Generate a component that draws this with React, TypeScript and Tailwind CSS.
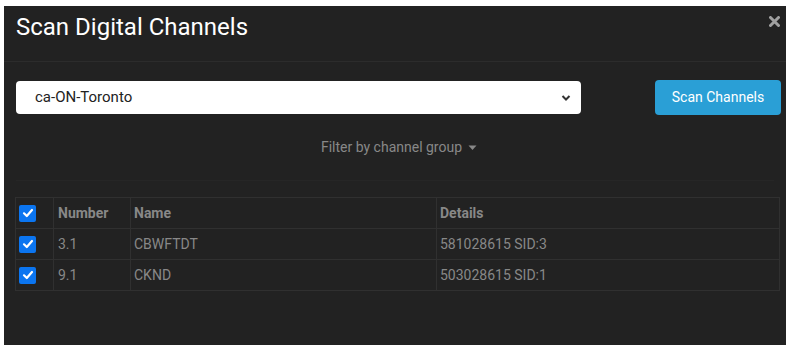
import React from "react";

function Check() {
  return (
    <span className="flex h-[17px] w-[17px] items-center justify-center rounded-[2px] bg-[#0b75f0]">
      <svg width="12" height="12" viewBox="0 0 12 12" fill="none">
        <path d="M2 6.3 L4.8 9 L10 3" stroke="white" strokeWidth="2.2" strokeLinecap="round" strokeLinejoin="round" />
      </svg>
    </span>
  );
}

const rows = [
  { n: "3.1", name: "CBWFTDT", d: "581028615 SID:3" },
  { n: "9.1", name: "CKND", d: "503028615 SID:1" },
];

export default function App() {
  return (
    <div className="h-[350px] w-[790px] bg-white pt-[6px] px-[4px]" style={{ fontFamily: "Roboto, 'Liberation Sans', sans-serif" }}>
      <div className="h-[339px] bg-[#222222]">
        <div className="relative flex h-[56px] items-start border-b border-[#2c2c2c] px-[12px] pt-[9px]">
          <h1 className="text-[24px] leading-none text-white">Scan Digital Channels</h1>
          <svg className="absolute right-[6px] top-[10px]" width="11" height="11" viewBox="0 0 11 11">
            <path d="M1.5 1.5 L9.5 9.5 M9.5 1.5 L1.5 9.5" stroke="#a0a0a0" strokeWidth="3" strokeLinecap="round" />
          </svg>
        </div>
        <div className="px-[12px] pt-[18px]">
          <div className="flex items-center justify-between">
            <div className="flex h-[33px] w-[565px] items-center justify-between rounded-[4px] bg-white pl-[19px] pr-[10px]">
              <span className="text-[15px] text-[#222]">ca-ON-Toronto</span>
              <svg width="10" height="8" viewBox="0 0 10 8">
                <path d="M1.5 2 L5 5.5 L8.5 2" stroke="#333" strokeWidth="2" fill="none" />
              </svg>
            </div>
            <button className="mr-[-7px] h-[35px] w-[126px] rounded-[4px] bg-[#2a9fd6] text-[14px] text-white">Scan Channels</button>
          </div>
          <div className="mt-[22px] flex items-center justify-center gap-[6px] pl-[8px] text-[14px] text-[#888]">
            <span>Filter by channel group</span>
            <svg width="9" height="6" viewBox="0 0 9 6"><path d="M0.5 0.5 L8.5 0.5 L4.5 5 Z" fill="#888" /></svg>
          </div>
          <div className="mt-[22px] border-t border-[#262626] pt-[16px]">
            <table className="w-[765px] border-collapse ml-[-1px] text-[14px] text-[#888]">
              <tbody>
                <tr className="h-[31px]">
                  <td className="w-[38px] border border-[#303030] pl-[3px]"><Check /></td>
                  <td className="w-[77px] border border-[#303030] pl-[4px] font-bold">Number</td>
                  <td className="w-[306px] border border-[#303030] pl-[3px] font-bold">Name</td>
                  <td className="border border-[#303030] pl-[3px] font-bold">Details</td>
                </tr>
                {rows.map((r) => (
                  <tr key={r.n} className="h-[31px]">
                    <td className="border border-[#303030] pl-[3px]"><Check /></td>
                    <td className="border border-[#303030] pl-[4px]">{r.n}</td>
                    <td className="border border-[#303030] pl-[3px]">{r.name}</td>
                    <td className="border border-[#303030] pl-[3px]">{r.d}</td>
                  </tr>
                ))}
              </tbody>
            </table>
          </div>
        </div>
      </div>
    </div>
  );
}
